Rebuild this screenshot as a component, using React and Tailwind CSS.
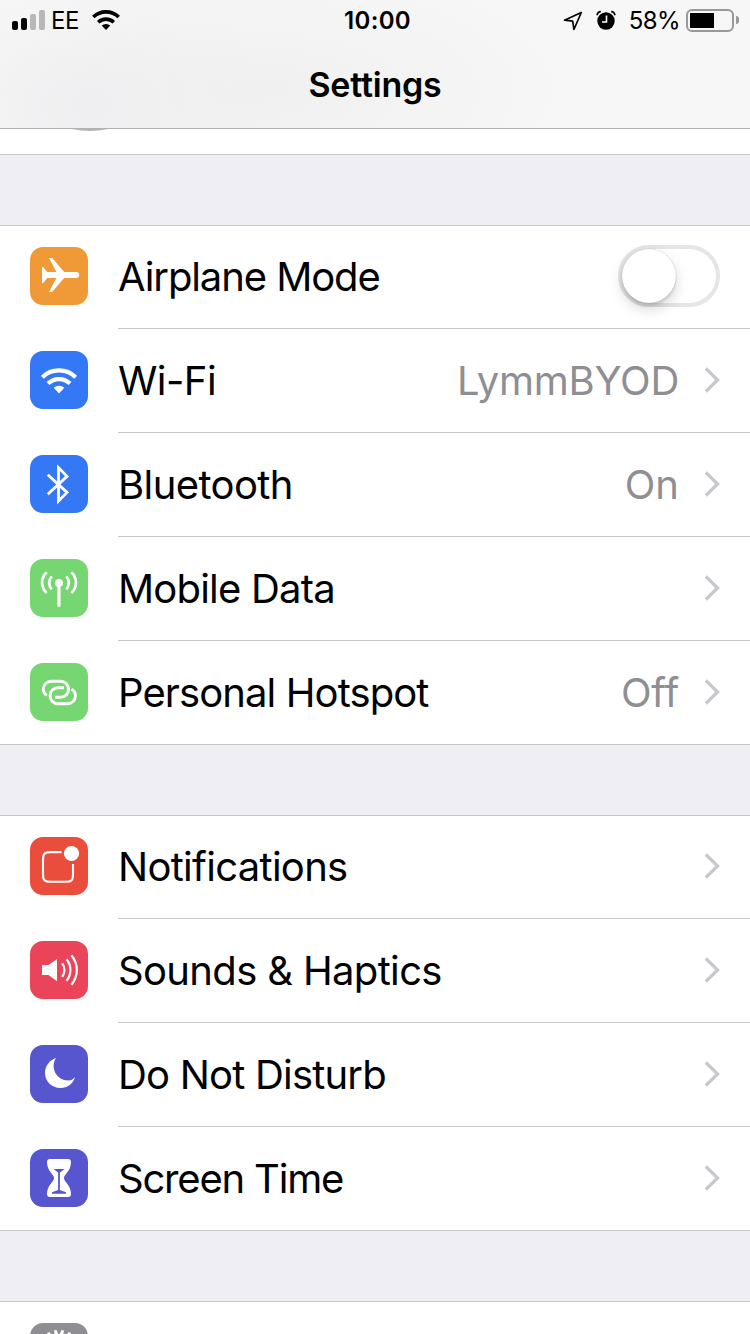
import React from "react";

function Glyph({ children }) {
  return (
    <svg viewBox="0 0 58 58" className="block h-[58px] w-[58px]" fill="none" stroke="white">
      {children}
    </svg>
  );
}

const icons = {
  airplane: (
    <Glyph>
      <path stroke="none" fill="white" d="M12 20h1.200l4 5h9.200L19 11h3.200l12 14H46a3.200 3 0 0 1 0 6H34.200L22 45h-3l7.400-14h-9.200l-4 5H12z" />
    </Glyph>
  ),
  wifi: (
    <Glyph>
      <path strokeWidth="4.200" d="M12.300 26.200a23.700 23.700 0 0 1 33.400 0M18 32.600a15.600 15.600 0 0 1 22 0" />
      <path stroke="none" fill="white" d="M29 42.400l-5.300-5.600a7.800 7.800 0 0 1 10.600 0z" />
    </Glyph>
  ),
  bluetooth: (
    <Glyph>
      <path strokeWidth="2.800" d="M17.800 19.800L37 37.400 28.500 46V12.600L37 21.400 17.800 39.200" />
    </Glyph>
  ),
  cellular: (
    <Glyph>
      <circle cx="29" cy="24" r="4" fill="white" stroke="none" />
      <path strokeWidth="3.200" strokeLinecap="round" d="M29 25v21.300" />
      <path strokeWidth="2.700" d="M21.700 17.300a9.700 9.700 0 0 0 0 13M36.300 17.300a9.700 9.700 0 0 1 0 13M16.700 13.200c-6.200 5.500-6.200 15 0 20.800M41.300 13.200c6.200 5.500 6.200 15 0 20.800" />
    </Glyph>
  ),
  hotspot: (
    <Glyph>
      <path strokeWidth="2.900" d="M17 32.300C13.800 30.500 13.300 27.500 13.300 26a8 8 0 0 1 8-7.700h9.200a8 8 0 0 1 0 16H25" />
      <path strokeWidth="2.900" d="M41.500 26.300C44.800 28 45.500 31 45.500 33a8 8 0 0 1-8 7.700H28a8 8 0 0 1 0-16h6" />
    </Glyph>
  ),
  notifications: (
    <Glyph>
      <path strokeWidth="2.100" d="M31.500 15H20.500c-6 0-7.500 1.600-7.500 7.600v14.500c0 6 1.600 7.600 7.600 7.600h15c6 0 7.400-1.600 7.400-7.600V27" transform="translate(0 .1)" />
      <circle cx="41.500" cy="16.500" r="7.600" fill="white" stroke="none" />
    </Glyph>
  ),
  sounds: (
    <Glyph>
      <path stroke="none" fill="white" d="M12 24h6.500L27 18v22.300L18.500 34H12z" />
      <path strokeWidth="2.200" d="M32.200 22.300c3 4 3 9.500 0 13.500M36.500 18.300c5.200 6 5.200 15.400 0 21.500M41.400 14.300c7.300 9 7.300 20.500 0 29.500" />
    </Glyph>
  ),
  moon: (
    <Glyph>
      <path stroke="none" fill="white" d="M26 13c-6 9 0 22.500 12.500 22.500 2.500 0 4.700-1 6.500-3.500-1.500 6.500-7.500 11-14.500 11C22 43 15 36.500 15 28c0-7 4.500-13 11-15z" />
    </Glyph>
  ),
  hourglass: (
    <Glyph>
      <path stroke="none" fill="white" d="M20 10h18c2 0 3 1 3 3 0 9.500-7 12-7 16s7 7 7 16c0 2-1 3-3 3H20c-2 0-3-1-3-3 0-9 7-12 7-16s-7-6.500-7-16c0-2 1-3 3-3z" />
      <path stroke="none" fill="#5856ce" d="M23.500 20h11l-4.600 3.500V41l6.100 2.200v1.500H22v-1.500L28.100 41V23.500z" />
    </Glyph>
  ),
};

function Chevron() {
  return (
    <svg viewBox="0 0 18 28" className="-mt-[2px] ml-[24px] h-[28px] w-[18px] shrink-0" fill="none" stroke="#c7c7cc" strokeWidth="3.200">
      <path d="M2.800 2.500L14.600 14 2.800 25.500" />
    </svg>
  );
}

function Toggle() {
  return (
    <div className="-mt-[2px] mr-px flex h-[62px] w-[102px] items-center rounded-full border-4 border-[#e5e5e5] bg-white">
      <div className="h-[54px] w-[54px] rounded-full bg-white shadow-[0_6px_14px_rgba(0,0,0,0.16),0_3px_3px_rgba(0,0,0,0.1),0_0_1px_rgba(0,0,0,0.3)]" />
    </div>
  );
}

function Row({ icon, color, label, track, value, valueTrack, toggle, last }) {
  return (
    <div className="flex h-[104px] pl-[30px]">
      <div className={`mt-[22px] h-[58px] w-[58px] shrink-0 overflow-hidden rounded-[13px] ${color}`}>{icons[icon]}</div>
      <div className={`ml-[30px] flex grow items-center border-b pr-[29px] ${last ? "border-transparent" : "border-[#c8c7cc]"}`}>
        <span className={`grow whitespace-nowrap text-[40px] leading-[48px] text-black ${track}`}>{label}</span>
        {value && <span className={`whitespace-nowrap text-[40px] leading-[48px] text-[#8e8e93] ${valueTrack}`}>{value}</span>}
        {toggle ? <Toggle /> : <Chevron />}
      </div>
    </div>
  );
}

function Gap() {
  return <div className="relative -my-px h-[72px] border-y border-[#c8c7cc] bg-[#efeef4]" />;
}

function StatusBar() {
  return (
    <div className="flex h-[40px] items-center justify-between pl-[12px] pr-[11px] text-[24px] leading-[40px]">
      <div className="flex w-[240px] items-center">
        <div className="flex h-[20px] items-end gap-[3px]">
          <div className="h-[9px] w-[6px] rounded-[2px] bg-black" />
          <div className="h-[12px] w-[6px] rounded-[2px] bg-black" />
          <div className="h-[16px] w-[6px] rounded-[2px] bg-[#b8b8b8]" />
          <div className="h-[20px] w-[6px] rounded-[2px] bg-[#b8b8b8]" />
        </div>
        <span className="ml-[6px] pt-[2px] tracking-[-0.5px]">EE</span>
        <svg viewBox="0 0 28 20" className="ml-[13px] h-[20px] w-[28px]" fill="none" stroke="black" strokeWidth="3.600">
          <path d="M1.300 7a18.200 18.200 0 0 1 25.400 0M6.200 12.300a11.200 11.200 0 0 1 15.600 0" />
          <path stroke="none" fill="black" d="M14 20l-4.300-4.400a6.400 6.400 0 0 1 8.600 0z" />
        </svg>
      </div>
      <span className="pl-[4px] pt-[2px] font-semibold tracking-[0.3px]">10:00</span>
      <div className="flex w-[240px] items-center justify-end">
        <svg viewBox="0 0 20 20" className="mt-px h-[20px] w-[20px]" fill="none" stroke="black" strokeWidth="1.700" strokeLinejoin="round">
          <path d="M18.300 1.500L1.500 9.200l8.200 1 1.200 8.300z" />
        </svg>
        <svg viewBox="0 0 20 20" className="ml-[13px] h-[20px] w-[20px]">
          <circle cx="10" cy="11" r="8.700" />
          <path d="M1.200 5.200A3.500 3.500 0 0 1 4.800 1.700M18.800 5.200A3.500 3.500 0 0 0 15.200 1.700" stroke="black" strokeWidth="1.800" fill="none" />
          <path d="M10.500 5.500v6.500H6" stroke="white" strokeWidth="1.600" fill="none" />
        </svg>
        <span className="ml-[13px] pt-[2px] tracking-[-0.6px]">58%</span>
        <div className="ml-[6px] h-[23px] w-[48px] rounded-[6px] border-2 border-[#999] p-[2px]">
          <div className="h-[15px] w-[24px] bg-black" />
        </div>
        <div className="ml-[2px] h-[8px] w-[3px] rounded-r-full bg-[#999]" />
      </div>
    </div>
  );
}

export default function App() {
  return (
    <div className="h-[1334px] w-[750px] overflow-hidden bg-white font-['Inter','Liberation_Sans',sans-serif] text-black">
      <header className="h-[129px] border-b border-[#b2b2b2] bg-[radial-gradient(ellipse_200px_130px_at_90px_105px,#efeff1,transparent),radial-gradient(ellipse_300px_130px_at_270px_90px,#f0f0f0,transparent)] bg-[#f7f7f7]">
        <StatusBar />
        <h1 className="pt-px text-center text-[34px] font-semibold leading-[88px] tracking-[-0.2px]">Settings</h1>
      </header>
      <div className="flex h-[26px] justify-center">
        <svg viewBox="0 0 750 26" className="h-[26px] w-[750px]">
          <path d="M72 0q18 4 36 0z" fill="#b5b5b5" />
        </svg>
      </div>
      <Gap />
      <section>
        <Row icon="airplane" color="bg-[#f09a37]" label="Airplane Mode" track="tracking-[-1.1px]" toggle />
        <Row icon="wifi" color="bg-[#3478f6]" label="Wi-Fi" track="tracking-[-0.55px]" value="LymmBYOD" valueTrack="tracking-[-0.25px]" />
        <Row icon="bluetooth" color="bg-[#3478f6]" label="Bluetooth" track="tracking-[-0.6px]" value="On" valueTrack="tracking-[0px]" />
        <Row icon="cellular" color="bg-[#76d672]" label="Mobile Data" track="tracking-[-0.8px]" />
        <Row icon="hotspot" color="bg-[#76d672]" label="Personal Hotspot" track="tracking-[-0.9px]" value="Off" valueTrack="tracking-[-0.2px]" last />
      </section>
      <Gap />
      <section>
        <Row icon="notifications" color="bg-[#eb4d3d]" label="Notifications" track="tracking-[-0.7px]" />
        <Row icon="sounds" color="bg-[#ea445a]" label="Sounds &amp; Haptics" track="tracking-[-0.65px]" />
        <Row icon="moon" color="bg-[#5856ce]" label="Do Not Disturb" track="tracking-[-0.8px]" />
        <Row icon="hourglass" color="bg-[#5856ce]" label="Screen Time" track="tracking-[-1.2px]" last />
      </section>
      <Gap />
      <div className="pl-[30px] pt-[22px]">
        <div className="h-[58px] w-[58px] rounded-[13px] bg-[#8e8e93]">
          <Glyph>
            <path stroke="none" fill="white" d="M17 10l2.500-1 3 5h-4zM24 7.500l2.500-.5 2.500 6h-4zM34 7.500L31.500 7 29 13h4zM41 10l-2.500-1-3 5h4z" />
          </Glyph>
        </div>
      </div>
    </div>
  );
}
